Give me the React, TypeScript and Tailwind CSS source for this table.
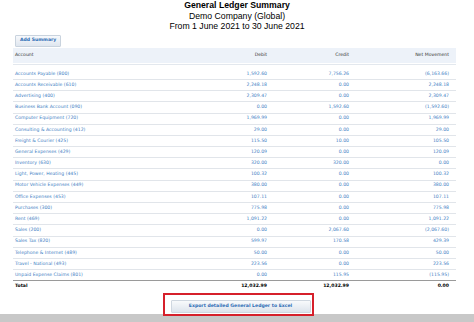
const rows: [string, string, string, string][] = [
  ["Accounts Payable (800)", "1,592.60", "7,756.26", "(6,163.66)"],
  ["Accounts Receivable (610)", "2,248.18", "0.00", "2,248.18"],
  ["Advertising (400)", "2,309.47", "0.00", "2,309.47"],
  ["Business Bank Account (090)", "0.00", "1,592.60", "(1,592.60)"],
  ["Computer Equipment (720)", "1,969.99", "0.00", "1,969.99"],
  ["Consulting & Accounting (412)", "29.00", "0.00", "29.00"],
  ["Freight & Courier (425)", "115.50", "10.00", "105.50"],
  ["General Expenses (429)", "120.09", "0.00", "120.09"],
  ["Inventory (630)", "320.00", "320.00", "0.00"],
  ["Light, Power, Heating (445)", "100.32", "0.00", "100.32"],
  ["Motor Vehicle Expenses (449)", "380.00", "0.00", "380.00"],
  ["Office Expenses (453)", "107.11", "0.00", "107.11"],
  ["Purchases (300)", "775.98", "0.00", "775.98"],
  ["Rent (469)", "1,091.22", "0.00", "1,091.22"],
  ["Sales (200)", "0.00", "2,067.60", "(2,067.60)"],
  ["Sales Tax (820)", "599.97", "170.58", "429.39"],
  ["Telephone & Internet (489)", "50.00", "0.00", "50.00"],
  ["Travel - National (493)", "223.56", "0.00", "223.56"],
  ["Unpaid Expense Claims (801)", "0.00", "115.95", "(115.95)"],
];

const cols = "grid grid-cols-[172px_82px_82px_100px] pr-[7px]";

export default function App() {
  return (
    <div className="w-[474px] h-[322px] bg-white overflow-hidden flex flex-col font-['DejaVu_Sans',sans-serif] leading-none">
      {/* Heading */}
      <div className="text-center text-black font-['Liberation_Sans',Arial,sans-serif] text-[8.7px] leading-[10.6px]">
        <div className="font-bold">General Ledger Summary</div>
        <div>Demo Company (Global)</div>
        <div>From 1 June 2021 to 30 June 2021</div>
      </div>

      <div className="flex pl-[15px] mt-[3px]">
        <button className="h-[12px] px-[4px] border border-[#c9d3de] rounded-[1px] bg-gradient-to-b from-[#f7f9fc] to-[#dfe6ef] text-[4.6px] font-bold text-[#2d6db5] leading-none">
          Add Summary
        </button>
      </div>

      {/* Table */}
      <div className="ml-[13px] w-[443px] mt-[1px] text-[4.6px]">
        <div className={`${cols} h-[15px] items-center bg-[#edf2f9] text-[#333]`}>
          <div className="pl-[2px]">Account</div>
          <div className="text-right">Debit</div>
          <div className="text-right">Credit</div>
          <div className="text-right">Net Movement</div>
        </div>
        <div className="h-[1px] mt-[1px] bg-[#e3e8ee]" />
        <div className="mt-[4px]">
          {rows.map((r, i) => (
            <div
              key={r[0]}
              className={`${cols} h-[11.2px] items-center text-[#4381c4] border-b ${
                i === rows.length - 1 ? "border-[#9a9a9a]" : "border-[#e1e5ea]"
              }`}
            >
              <div className="pl-[2px] whitespace-nowrap">{r[0]}</div>
              <div className="text-right">{r[1]}</div>
              <div className="text-right">{r[2]}</div>
              <div className="text-right">{r[3]}</div>
            </div>
          ))}
          <div className={`${cols} h-[10px] items-center font-bold text-black`}>
            <div className="pl-[2px]">Total</div>
            <div className="text-right">12,032.99</div>
            <div className="text-right">12,032.99</div>
            <div className="text-right">0.00</div>
          </div>
        </div>
      </div>

      {/* Export */}
      <div className="flex-1 flex flex-col justify-end">
        <div className="flex justify-center">
          <div className="relative flex w-[140px] ml-[7px] mb-[1px]">
            <button className="w-full h-[13px] border border-[#cfd7e0] rounded-[1px] bg-gradient-to-b from-[#f8fafc] to-[#dde4ec] text-[4.6px] font-bold text-[#2d6db5] leading-none">
              Export detailed General Ledger to Excel
            </button>
            <div className="absolute -left-[8px] -right-[3px] -top-[7px] -bottom-[3px] border-2 border-[#d6202b] z-10" />
          </div>
        </div>
        <div className="h-[8px] bg-[#c8c8c8]" />
      </div>
    </div>
  );
}
